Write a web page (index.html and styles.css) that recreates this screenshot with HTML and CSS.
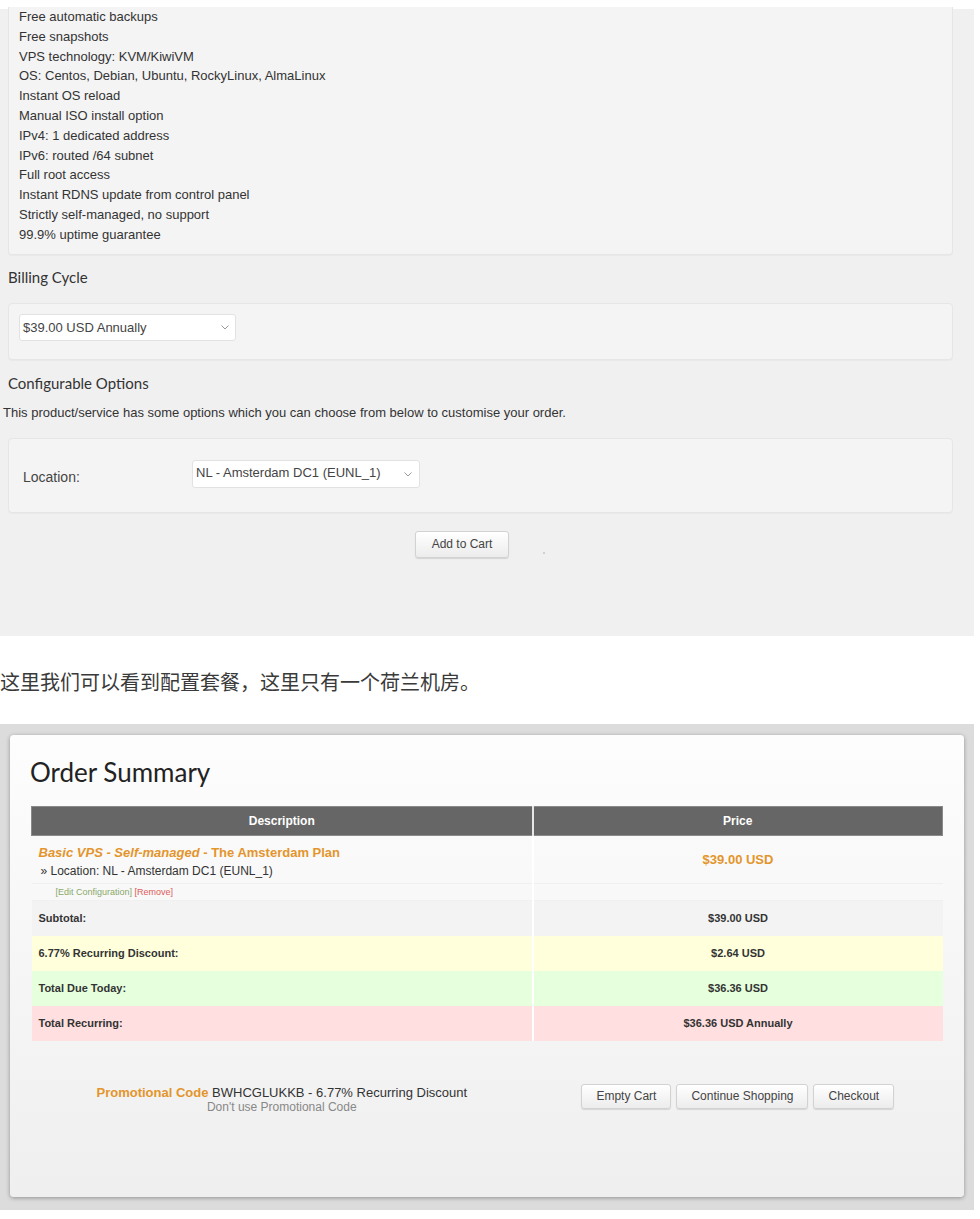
FILE: index.html
```html
<!DOCTYPE html>
<html lang="zh">
<head>
<meta charset="utf-8">
<title>Order</title>
<link rel="stylesheet" href="styles.css">
</head>
<body>
<div class="shot shot-config">
  <div class="panel features">
    <ul class="feature-list">
      <li>Free automatic backups</li>
      <li>Free snapshots</li>
      <li>VPS technology: KVM/KiwiVM</li>
      <li>OS: Centos, Debian, Ubuntu, RockyLinux, AlmaLinux</li>
      <li>Instant OS reload</li>
      <li>Manual ISO install option</li>
      <li>IPv4: 1 dedicated address</li>
      <li>IPv6: routed /64 subnet</li>
      <li>Full root access</li>
      <li>Instant RDNS update from control panel</li>
      <li>Strictly self-managed, no support</li>
      <li>99.9% uptime guarantee</li>
    </ul>
  </div>
  <h3 class="section-title">Billing Cycle</h3>
  <div class="panel billing">
    <div class="select select-billing">
      <span class="select-text">$39.00 USD Annually</span>
      <svg class="chev" width="8" height="5" viewBox="0 0 8 5"><polyline points="0.5,0.5 4,4 7.5,0.5" fill="none" stroke="#999" stroke-width="1"/></svg>
    </div>
  </div>
  <h3 class="section-title section-title-2">Configurable Options</h3>
  <p class="desc">This product/service has some options which you can choose from below to customise your order.</p>
  <div class="panel options">
    <span class="opt-label">Location:</span>
    <div class="select select-location">
      <span class="select-text">NL - Amsterdam DC1 (EUNL_1)</span>
      <svg class="chev" width="8" height="5" viewBox="0 0 8 5"><polyline points="0.5,0.5 4,4 7.5,0.5" fill="none" stroke="#999" stroke-width="1"/></svg>
    </div>
  </div>
  <div class="cart-row">
    <button class="btn btn-add">Add to Cart</button>
    <span class="dot"></span>
  </div>
</div>

<p class="cn-text">这里我们可以看到配置套餐，这里只有一个荷兰机房。</p>

<div class="shot shot-summary">
  <div class="card">
    <h2 class="card-title">Order Summary</h2>
    <table class="cart">
      <colgroup><col class="col-desc"><col class="col-price"></colgroup>
      <thead>
        <tr><th>Description</th><th>Price</th></tr>
      </thead>
      <tbody>
        <tr class="row-product">
          <td class="cell-desc">
            <div class="prod-wrap">
              <div class="prod-name"><em>Basic VPS - Self-managed</em> - The Amsterdam Plan</div>
              <div class="prod-opt">&raquo; Location: NL - Amsterdam DC1 (EUNL_1)</div>
            </div>
          </td>
          <td class="cell-price price-main">$39.00 USD</td>
        </tr>
        <tr class="row-edit">
          <td class="cell-edit"><span class="link-edit">[Edit Configuration]</span> <span class="link-remove">[Remove]</span></td>
          <td></td>
        </tr>
        <tr class="row-sum row-subtotal">
          <td class="sum-label">Subtotal:</td>
          <td class="sum-value">$39.00 USD</td>
        </tr>
        <tr class="row-sum row-discount">
          <td class="sum-label">6.77% Recurring Discount:</td>
          <td class="sum-value">$2.64 USD</td>
        </tr>
        <tr class="row-sum row-due">
          <td class="sum-label">Total Due Today:</td>
          <td class="sum-value">$36.36 USD</td>
        </tr>
        <tr class="row-sum row-recurring">
          <td class="sum-label">Total Recurring:</td>
          <td class="sum-value">$36.36 USD Annually</td>
        </tr>
      </tbody>
    </table>
    <div class="cart-footer">
      <div class="promo">
        <div class="promo-line"><span class="promo-key">Promotional Code</span> BWHCGLUKKB - 6.77% Recurring Discount</div>
        <div class="promo-remove">Don't use Promotional Code</div>
      </div>
      <div class="actions">
        <button class="btn">Empty Cart</button>
        <button class="btn">Continue Shopping</button>
        <button class="btn">Checkout</button>
      </div>
    </div>
  </div>
</div>
</body>
</html>
```

FILE: styles.css
```css
html, body {
  margin: 0;
  padding: 0;
  background: #ffffff;
}

body {
  font-family: "Liberation Sans", Arial, sans-serif;
  color: #333333;
  font-size: 13px;
}

/* ---------- first screenshot ---------- */
.shot-config {
  margin-top: 9px;
  width: 974px;
  box-sizing: border-box;
  padding: 0 21px 78px 8px;
  background: #f0f0f0;
  display: flow-root;
}

.panel {
  background: #f4f4f4;
  border: 1px solid #e6e6e6;
  border-radius: 4px;
  box-shadow: 0 1px 1px rgba(0, 0, 0, 0.03);
}

.features {
  border-top: none;
  border-radius: 0 0 4px 4px;
  padding: 0 10px 9px;
}

.feature-list {
  list-style: none;
  margin: -2px 0 0;
  padding: 0;
  font-size: 13px;
  line-height: 19.8px;
  color: #333;
}

.section-title {
  font-family: Lato, "Open Sans", sans-serif;
  font-weight: 400;
  font-size: 15px;
  line-height: 20px;
  color: #333;
  margin: 12px 0 16px;
}

.section-title-2 {
  margin: 13px 0 0;
}

.billing {
  padding: 10px 10px 18px;
}

.select {
  display: flex;
  align-items: center;
  justify-content: space-between;
  box-sizing: border-box;
  background: #ffffff;
  border: 1px solid #e2e2e2;
  border-radius: 3px;
  font-size: 13px;
  color: #444;
}

.select-billing {
  width: 217px;
  height: 27px;
  padding: 0 6px 0 3px;
}

.select-location {
  width: 228px;
  height: 28px;
  padding: 0 7px 0 3px;
  align-items: flex-start;
}

.select-location .select-text {
  margin-top: 4px;
}

.select-location .chev {
  margin-top: 11px;
}

.desc {
  font-size: 13px;
  line-height: 20px;
  margin: 10px 0 0 -5px;
  color: #333;
}

.options {
  margin-top: 15px;
  display: grid;
  grid-template-columns: 169px auto;
  align-items: start;
  padding: 21px 14px 24px;
}

.opt-label {
  font-size: 14px;
  line-height: 20px;
  margin-top: 7px;
  color: #444;
}

.cart-row {
  display: flex;
  align-items: flex-start;
  margin-top: 18px;
  padding-left: 407px;
}

.btn {
  box-sizing: border-box;
  height: 25px;
  padding: 0 14px;
  font-family: "Liberation Sans", Arial, sans-serif;
  font-size: 12px;
  color: #444;
  background: linear-gradient(#ffffff, #ececec);
  border: 1px solid #d2d2d2;
  border-radius: 3px;
  box-shadow: 0 1px 1px rgba(0, 0, 0, 0.12);
}

.btn-add {
  width: 94px;
  height: 27px;
  padding: 0;
}

.dot {
  width: 2px;
  height: 2px;
  border-radius: 1px;
  background: #c4c4c4;
  margin: 21px 0 0 34px;
}

/* ---------- text between ---------- */
.cn-text {
  font-family: "Noto Sans CJK SC", "Noto Sans", sans-serif;
  font-size: 20px;
  line-height: 28px;
  color: #3a3a3a;
  margin: 32px 0 28px;
}

/* ---------- second screenshot ---------- */
.shot-summary {
  width: 974px;
  box-sizing: border-box;
  padding: 11px 10px 13px;
  background: #dcdcdc;
}

.card {
  box-sizing: border-box;
  height: 462px;
  padding: 22px 21px 0;
  border-radius: 4px;
  background: linear-gradient(#fdfdfd, #efefef);
  box-shadow: 0 1px 4px rgba(0, 0, 0, 0.35);
}

.card-title {
  font-family: Lato, "Open Sans", sans-serif;
  font-weight: 400;
  font-size: 26px;
  line-height: 30px;
  color: #222;
  margin: 0 0 19px -1px;
}

.cart {
  width: 912px;
  table-layout: fixed;
  border-collapse: collapse;
  font-family: "Liberation Sans", Arial, sans-serif;
}

.col-desc { width: 55%; }
.col-price { width: 45%; }

.cart th {
  height: 28px;
  padding: 0;
  background: #666666;
  color: #ffffff;
  font-size: 12px;
  font-weight: bold;
  text-align: center;
  border: 1px solid #8a8a8a;
}

.cart td + td {
  border-left: 2px solid #ffffff;
}

.cart th + th {
  border-left: 2px solid #e6e6e6;
}

.cart td {
  padding: 0;
}

.row-product td {
  height: 47px;
  vertical-align: middle;
  border-bottom: 1px solid #efefef;
}

.row-product .cell-desc {
  vertical-align: top;
}

.prod-wrap {
  padding: 8px 0 0 7px;
}

.prod-name {
  font-size: 13px;
  line-height: 18px;
  font-weight: bold;
  color: #e3952c;
}

.prod-name em {
  font-style: italic;
}

.prod-opt {
  font-size: 12px;
  line-height: 18px;
  color: #333;
  padding-left: 2px;
}

.price-main {
  text-align: center;
  font-size: 13px;
  font-weight: bold;
  color: #e3952c;
}

.row-edit td {
  height: 16px;
  border-bottom: 1px solid #f0f0f0;
}

.cell-edit {
  font-size: 9px;
  line-height: 16px;
  text-indent: 24px;
}

.link-edit { color: #8aa86a; }
.link-remove { color: #de5a5a; }

.row-sum td {
  height: 35px;
  font-size: 11px;
  font-weight: bold;
  color: #333;
}

.sum-label {
  text-indent: 7px;
}

.sum-value {
  text-align: center;
}

.row-subtotal td { background: #f3f3f3; }
.row-discount td { background: #ffffdc; }
.row-due td { background: #e6ffdd; }
.row-recurring td { background: #ffdfdf; }

.cart-footer {
  display: grid;
  grid-template-columns: 55% 45%;
  align-items: start;
  margin-top: 43px;
  width: 912px;
}

.promo {
  text-align: center;
  padding-top: 1px;
}

.promo-line {
  font-size: 13px;
  line-height: 15px;
  color: #333;
}

.promo-key {
  color: #e3952c;
  font-weight: bold;
}

.promo-remove {
  font-size: 12px;
  line-height: 15px;
  color: #888;
}

.actions {
  display: flex;
  justify-content: center;
  gap: 5px;
}
```
